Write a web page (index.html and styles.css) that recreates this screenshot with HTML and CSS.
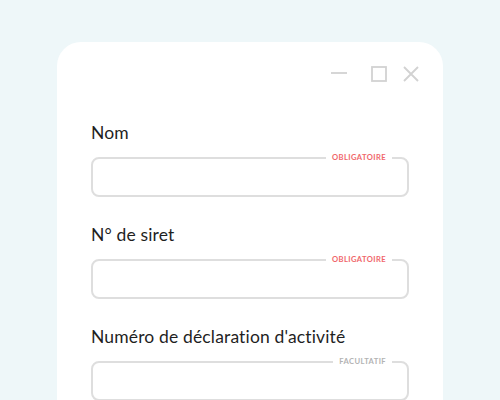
FILE: index.html
```html
<!DOCTYPE html>
<html lang="fr">
<head>
<meta charset="utf-8">
<link rel="stylesheet" href="styles.css">
</head>
<body>
<div class="card">
  <div class="controls">
    <svg class="ctl min" width="16" height="16" viewBox="0 0 16 16"><path d="M0 7H16" stroke="#d2d2d2" stroke-width="1.8" fill="none"/></svg>
    <svg class="ctl max" width="16" height="16" viewBox="0 0 16 16"><rect x="1" y="1" width="14" height="14" stroke="#d2d2d2" stroke-width="1.8" fill="none"/></svg>
    <svg class="ctl close" width="16" height="16" viewBox="0 0 16 16"><path d="M1 1L15 15M15 1L1 15" stroke="#d2d2d2" stroke-width="1.9" fill="none"/></svg>
  </div>
  <div class="field">
    <div class="label">Nom</div>
    <div class="box"><span class="tag req">OBLIGATOIRE</span></div>
  </div>
  <div class="field">
    <div class="label">N° de siret</div>
    <div class="box"><span class="tag req">OBLIGATOIRE</span></div>
  </div>
  <div class="field">
    <div class="label">Numéro de déclaration d'activité</div>
    <div class="box"><span class="tag opt">FACULTATIF</span></div>
  </div>
</div>
</body>
</html>
```
FILE: styles.css
```css
html, body {
  margin: 0;
  padding: 0;
  background: #eef7f9;
  font-family: "Lato", "Noto Sans", sans-serif;
  overflow: hidden;
}
.card {
  margin: 42px 0 0 57px;
  width: 386px;
  height: 358px;
  background: #ffffff;
  border-radius: 24px 24px 0 0;
  padding: 24px 34px 0 34px;
  box-sizing: border-box;
}
.controls {
  display: flex;
  justify-content: flex-end;
  margin-right: -10px;
  height: 16px;
}
.ctl { display: block; }
.max { margin-left: 24px; }
.close { margin-left: 16px; }
.field {
  margin-top: 41px;
}
.field + .field {
  margin-top: 28px;
}
.label {
  font-size: 17.5px;
  color: #1f1f1f;
  line-height: 20px;
  letter-spacing: 0.15px;
}
.box {
  position: relative;
  margin-top: 14px;
  height: 40px;
  border: 2px solid #dedede;
  border-radius: 8px;
  box-sizing: border-box;
}
.tag {
  position: absolute;
  top: -7px;
  right: 15px;
  background: #ffffff;
  padding: 0 6px;
  font-size: 7.6px;
  font-weight: 700;
  letter-spacing: 0.4px;
  line-height: 10px;
}
.req { color: #f0676b; }
.opt { color: #b3b3b3; }
```
